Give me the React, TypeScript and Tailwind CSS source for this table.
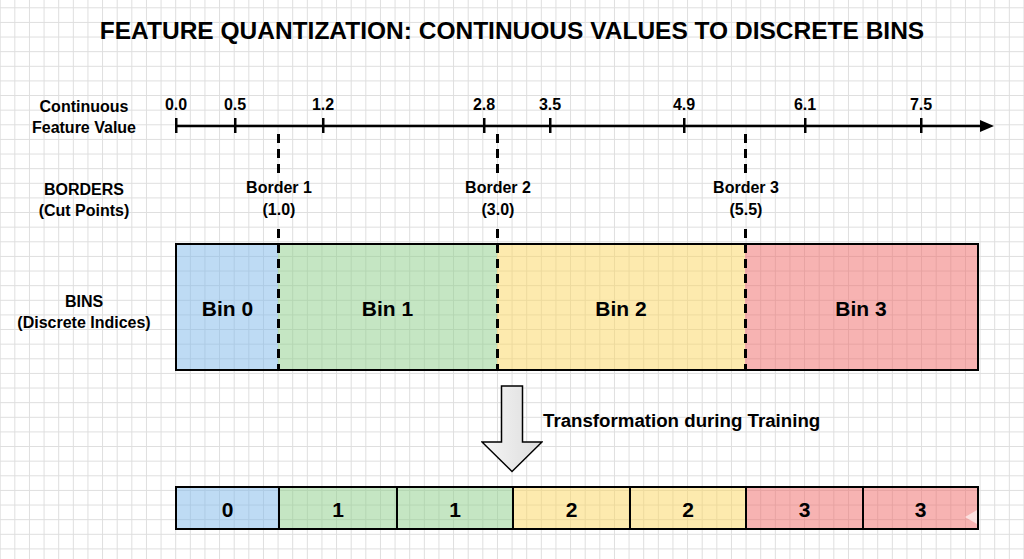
import React from 'react';

const TICKS = [
  { label: '0.0', x: 0 },
  { label: '0.5', x: 59 },
  { label: '1.2', x: 147 },
  { label: '2.8', x: 308 },
  { label: '3.5', x: 374 },
  { label: '4.9', x: 508 },
  { label: '6.1', x: 629 },
  { label: '7.5', x: 745 },
];

const BORDERS = [
  { name: 'Border 1', value: '(1.0)', x: 103 },
  { name: 'Border 2', value: '(3.0)', x: 322 },
  { name: 'Border 3', value: '(5.5)', x: 570 },
];

const DASH =
  'absolute w-[3px] bg-[repeating-linear-gradient(to_bottom,#000_0px,#000_9px,transparent_9px,transparent_15px)]';

const LabelCol: React.FC<{ lines: string[]; className?: string }> = ({ lines, className }) => (
  <div className={`w-[175px] shrink-0 pr-[7px] flex flex-col text-center text-[16px] leading-[21px] ${className ?? ''}`}>
    {lines.map((l) => (
      <span key={l}>{l}</span>
    ))}
  </div>
);

export default function App() {
  return (
    <div className="relative w-[1024px] h-[559px] overflow-hidden bg-white text-black font-bold font-['Liberation_Sans',Arial,sans-serif] [background-image:linear-gradient(to_right,#dedede_1px,transparent_1px),linear-gradient(to_bottom,#dedede_1px,transparent_1px)] [background-size:14.63px_14.63px] [background-position:-0.3px_7.3px]">
      <h1 className="h-[62px] flex items-center justify-center text-[24.5px]">
        FEATURE QUANTIZATION: CONTINUOUS VALUES TO DISCRETE BINS
      </h1>

      <div className="relative">
        {/* axis */}
        <div className="flex h-[80px]">
          <LabelCol lines={['Continuous', 'Feature Value']} className="pt-[34px]" />
          <div className="relative flex-1">
            <svg width="825" height="80" className="absolute left-0 top-0">
              <line x1="0" y1="64" x2="808" y2="64" stroke="#000" strokeWidth="2.5" />
              <polygon points="819,64 805,58 805,70" fill="#000" />
              {TICKS.map((t) => (
                <line key={t.label} x1={t.x + 1.25} y1="56" x2={t.x + 1.25} y2="71" stroke="#000" strokeWidth="2.5" />
              ))}
            </svg>
            {TICKS.map((t) => (
              <span
                key={t.label}
                className="absolute top-[34px] -translate-x-1/2 text-[16px] leading-[18px]"
                style={{ left: t.x + 1 }}
              >
                {t.label}
              </span>
            ))}
          </div>
        </div>

        {/* borders */}
        <div className="flex h-[101px]">
          <LabelCol lines={['BORDERS', '(Cut Points)']} className="pt-[37px]" />
          <div className="relative flex-1">
            {BORDERS.map((b) => (
              <div
                key={b.name}
                className="absolute top-[35px] -translate-x-1/2 flex flex-col items-center text-[16px] leading-[22px]"
                style={{ left: b.x + 1 }}
              >
                <span>{b.name}</span>
                <span>{b.value}</span>
              </div>
            ))}
          </div>
        </div>

        {/* bins */}
        <div className="flex h-[128px]">
          <LabelCol lines={['BINS', '(Discrete Indices)']} className="justify-center pt-[9px]" />
          <div className="flex w-[804px] h-full border-2 border-black text-[21px] pt-[3px]">
            <div className="w-[101px] -mt-[3px] pt-[3px] flex items-center justify-center bg-[#7db8ea]/50">Bin 0</div>
            <div className="w-[219px] -mt-[3px] pt-[3px] flex items-center justify-center bg-[#8ccd88]/50">Bin 1</div>
            <div className="w-[248px] -mt-[3px] pt-[3px] flex items-center justify-center bg-[#fbd55e]/50">Bin 2</div>
            <div className="w-[232px] -mt-[3px] pt-[3px] flex items-center justify-center bg-[#ef6865]/50">Bin 3</div>
          </div>
        </div>

        {/* dashed cut lines */}
        {BORDERS.map((b) => (
          <React.Fragment key={b.name}>
            <div className={`${DASH} top-[72px] h-[39px]`} style={{ left: 175 + b.x - 1.5 }} />
            <div className={`${DASH} top-[167px] h-[142px]`} style={{ left: 175 + b.x - 1.5 }} />
          </React.Fragment>
        ))}

        {/* transformation arrow */}
        <div className="flex h-[115px]">
          <div className="w-[175px] shrink-0" />
          <div className="flex items-start pl-[306px] pt-[14px]">
            <svg width="62" height="88" viewBox="0 0 62 88">
              <defs>
                <linearGradient id="arrowFill" x1="0" y1="0" x2="1" y2="0">
                  <stop offset="0" stopColor="#f6f6f6" />
                  <stop offset="1" stopColor="#dcdcdc" />
                </linearGradient>
              </defs>
              <polygon
                points="20.5,1 41.5,1 41.5,57 61,57 31,86.5 1,57 20.5,57"
                fill="url(#arrowFill)"
                stroke="#000"
                strokeWidth="1.5"
                strokeLinejoin="miter"
              />
            </svg>
            <span className="mt-[25px] text-[18.7px] leading-[22px] whitespace-nowrap">Transformation during Training</span>
          </div>
        </div>

        {/* transformed values */}
        <div className="flex h-[44px]">
          <div className="w-[175px] shrink-0" />
          <div className="relative flex w-[804px] h-full border-2 border-black text-[21px]">
            <div className="w-[101px] pt-[4px] flex items-center justify-center bg-[#7db8ea]/50">0</div>
            <div className="w-[118px] pt-[4px] flex items-center justify-center border-l-2 border-black bg-[#8ccd88]/50">1</div>
            <div className="w-[116px] pt-[4px] flex items-center justify-center border-l-2 border-black bg-[#8ccd88]/50">1</div>
            <div className="w-[117px] pt-[4px] flex items-center justify-center border-l-2 border-black bg-[#fbd55e]/50">2</div>
            <div className="w-[116px] pt-[4px] flex items-center justify-center border-l-2 border-black bg-[#fbd55e]/50">2</div>
            <div className="w-[117px] pt-[4px] flex items-center justify-center border-l-2 border-black bg-[#ef6865]/50">3</div>
            <div className="w-[115px] pt-[4px] flex items-center justify-center border-l-2 border-black bg-[#ef6865]/50">3</div>
            <svg width="12" height="14" className="absolute right-0 top-[22px]">
              <polygon points="0,7 12,0 12,14" fill="#fff" fillOpacity="0.6" />
            </svg>
          </div>
        </div>
      </div>
    </div>
  );
}
